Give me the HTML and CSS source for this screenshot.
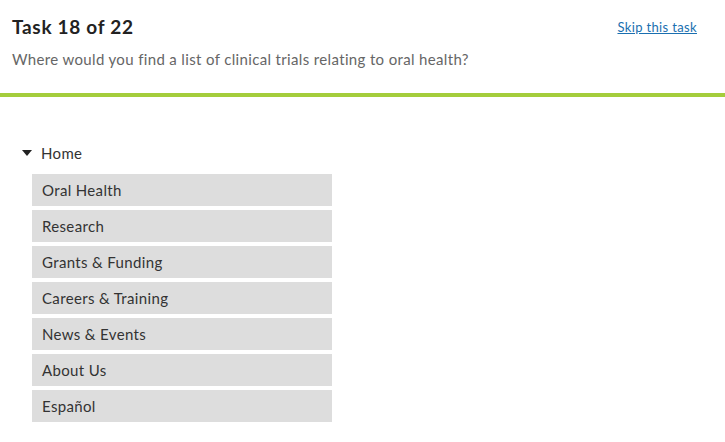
FILE: index.html
```html
<!DOCTYPE html>
<html lang="en">
<head>
    <meta charset="UTF-8">
    <meta name="viewport" content="width=device-width, initial-scale=1.0">
    <title>Task 18 of 22</title>
    <link rel="stylesheet" href="styles.css">
</head>
<body>
    <header class="task-header">
        <div class="task-top">
            <h1>Task 18 of 22</h1>
            <a href="#" class="skip">Skip this task</a>
        </div>
        <p class="question">Where would you find a list of clinical trials relating to oral health?</p>
    </header>
    <div class="tree">
        <div class="node-home">
            <span class="caret"></span>
            <span>Home</span>
        </div>
        <ul class="children">
            <li>Oral Health</li>
            <li>Research</li>
            <li>Grants &amp; Funding</li>
            <li>Careers &amp; Training</li>
            <li>News &amp; Events</li>
            <li>About Us</li>
            <li>Español</li>
        </ul>
    </div>
</body>
</html>
```

FILE: styles.css
```css
body {
    font-family: Lato, "Open Sans", sans-serif;
    letter-spacing: 0.35px;
    margin: 0;
    color: #333;
    background: #fff;
}
.task-header {
    padding: 15px 28px 0 12px;
    border-bottom: 4px solid #a4cd3c;
    height: 78px;
}
.task-top {
    display: flex;
    justify-content: space-between;
    align-items: center;
}
h1 {
    font-size: 19px;
    font-weight: bold;
    letter-spacing: 0.7px;
    margin: 0;
    color: #222;
    line-height: 24px;
}
.skip {
    font-size: 13px;
    color: #1a6fb0;
    text-decoration: underline;
}
.question {
    margin: 10px 0 0;
    font-size: 15px;
    line-height: 20px;
    color: #666;
}
.tree {
    padding: 44px 0 0 22px;
}
.node-home {
    display: flex;
    align-items: center;
    font-size: 15px;
    height: 24px;
    margin-bottom: 9px;
}
.caret {
    width: 0;
    height: 0;
    border-left: 5px solid transparent;
    border-right: 5px solid transparent;
    border-top: 6px solid #222;
    margin-right: 9px;
}
.children {
    list-style: none;
    margin: 0 0 0 10px;
    padding: 0;
    display: flex;
    flex-direction: column;
    gap: 4px;
}
.children li {
    width: 290px;
    height: 32px;
    line-height: 32px;
    padding-left: 10px;
    background: #dddddd;
    font-size: 15px;
    color: #333;
}
```
